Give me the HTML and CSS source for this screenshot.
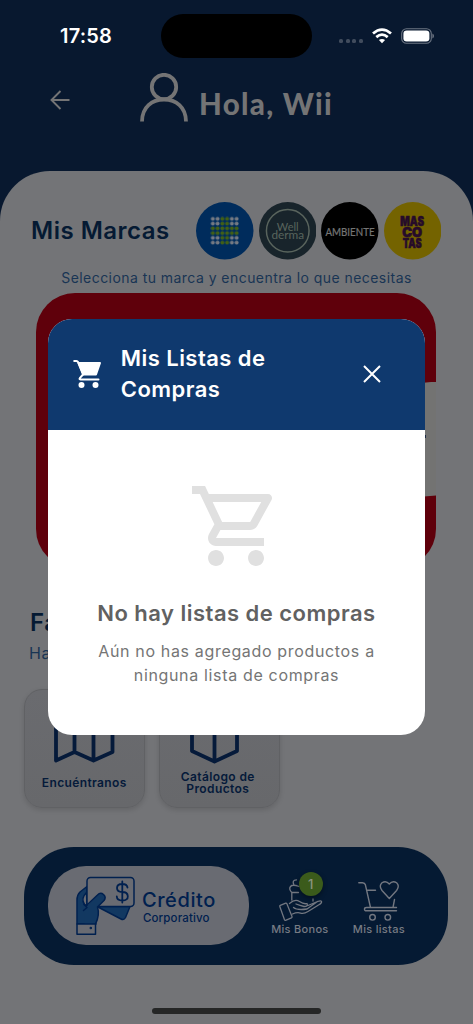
FILE: index.html
```html
<!DOCTYPE html>
<html lang="es">
<head>
<meta charset="utf-8">
<meta name="viewport" content="width=device-width, initial-scale=1">
<title>Mis Listas de Compras</title>
<link rel="stylesheet" href="styles.css">
</head>
<body>
<div class="screen">
  <div class="status">
    <span class="clock">17:58</span>
    <span class="island"></span>
    <span class="dots"><i></i><i></i><i></i><i></i></span>
    <svg class="wifi" width="20" height="16" viewBox="0 0 20 16" fill="none" stroke="#fff" stroke-width="2.8"><path d="M1 5.500Q10-2.200 19 5.500"/><path d="M4.300 9.100Q10 4.200 15.700 9.100"/><path d="M10 15.200 6.900 12.100Q10 9.700 13.100 12.100Z" fill="#fff" stroke="none"/></svg>
    <svg class="battery" width="34" height="16" viewBox="0 0 34 16"><rect x=".7" y=".7" width="29.600" height="14.600" rx="4.800" fill="none" stroke="#6b7482" stroke-width="1.1"/><rect x="2.400" y="2.400" width="26" height="11.200" rx="3.300" fill="#fff"/><path d="M31.400 5.500q1.600.6 1.600 2.500t-1.600 2.500z" fill="#6b7482"/></svg>
  </div>
  <header class="greeting">
    <svg class="back" width="20" height="20" viewBox="0 0 20 20" fill="none" stroke="#747475" stroke-width="1.900"><path d="M19.500 10H1.500M10.500 1 1.500 10l9 9"/></svg>
    <svg class="user" width="50" height="50" viewBox="0 0 50 50" fill="none" stroke="#747475" stroke-width="3.800"><circle cx="25" cy="14" r="12.200"/><path d="M3 48.500C3 34 13 26.500 25 26.500S47 34 47 48.500"/></svg>
    <h1>Hola, Wii</h1>
  </header>
  <main class="sheet">
    <div class="brands">
      <h2>Mis Marcas</h2>
      <div class="logos">
        <svg class="logo" viewBox="0 0 58 58"><defs><pattern id="w" x="14.600" y="14.600" width="4.800" height="4.800" patternUnits="userSpaceOnUse"><circle cx="2.400" cy="2.400" r="2" fill="#747982"/></pattern><pattern id="g" x="14.600" y="14.600" width="4.800" height="4.800" patternUnits="userSpaceOnUse"><circle cx="2.400" cy="2.400" r="2" fill="#415f16"/></pattern></defs><circle cx="29" cy="29" r="29" fill="#002c5c"/><path d="M14.600 14.600h28.800v28.800H14.600z" fill="url(#w)"/><path d="M24.200 14.600h9.600v28.800h-9.600zM14.600 24.200h28.800v9.600H14.600z" fill="#002c5c"/><path d="M24.200 14.600h9.600v9.600h9.600v9.600h-9.600v9.600h-9.600v-9.600h-9.600v-9.600h9.600z" fill="url(#g)"/></svg>
        <svg class="logo" viewBox="0 0 58 58"><circle cx="29" cy="29" r="29" fill="#18242b"/><circle cx="29" cy="29" r="21.500" fill="none" stroke="#59645d" stroke-width="1.500"/><g class="derma" text-anchor="middle"><text x="29" y="29.500" textLength="22" lengthAdjust="spacingAndGlyphs">Well</text><text x="29" y="37.500" textLength="33" lengthAdjust="spacingAndGlyphs">derma</text></g></svg>
        <svg class="logo" viewBox="0 0 58 58"><circle cx="29" cy="29" r="29" fill="#000"/><text class="ambiente" x="4.500" y="33.800" textLength="49.500" lengthAdjust="spacingAndGlyphs">AMBIENTE</text></svg>
        <svg class="logo" viewBox="0 0 58 58"><circle cx="29" cy="29" r="29" fill="#746300"/><g class="mascotas" text-anchor="middle"><text x="28.500" y="24.500" textLength="24" lengthAdjust="spacingAndGlyphs">MAS</text><text x="28.500" y="35" textLength="20" lengthAdjust="spacingAndGlyphs">CO</text><text x="28.500" y="46" textLength="19" lengthAdjust="spacingAndGlyphs">TAS</text></g></svg>
      </div>
    </div>
    <p class="hint">Selecciona tu marca y encuentra lo que necesitas</p>
    <div class="banner"><div class="band"></div></div>
    <h2 class="section">Fa</h2>
    <p class="sub">Ha</p>
    <div class="tiles">
      <div class="tile">
        <svg width="64" height="50" viewBox="0 0 64 50" fill="none" stroke="#051a3a" stroke-width="3.800" stroke-linejoin="round"><path d="M4 6 22.500-2 41.500 6 60.500-2V38L41.500 46.500 22.500 38 4 46.500ZM22.500 0V38M41.500 7V46"/></svg>
        <span>Encuéntranos</span>
      </div>
      <div class="tile two">
        <svg width="64" height="50" viewBox="0 0 64 50" fill="none" stroke="#051a3a" stroke-width="3.800" stroke-linejoin="round"><path d="M5 0 27.500 10 50 0V37L27.500 47.500 5 37ZM27.500 10V47"/></svg>
        <span>Catálogo de<br>Productos</span>
      </div>
    </div>
    <nav class="dock">
      <div class="credit">
        <svg width="60" height="60" viewBox="0 0 60 60" fill="none" stroke="#00204f" stroke-width="1.500" stroke-linejoin="round" stroke-linecap="round"><path d="M22 30.500 46 43q3 1.500 4.500-1.500l4.500-11z" fill="#123861"/><path d="M2 48V24q0-5 3-8l7-5.500V34L21 48z" fill="#123861"/><path d="M11.500 16.500q-6 6-2 12l2.500 1.500z" fill="#696b72"/><rect x="12" y="1.500" width="47" height="29" rx="3.500" fill="#696b72"/><path d="M9.500 34.500 12 31V30L22.500 19q3-3.200 6-.5t.5 6L22.500 31q2.500 8-2 17H9.500z" fill="#123861" stroke="none"/><path d="M8.500 34.500 12 31.500 9 28.500M12 29 22.500 19q3-3.200 6-.5t.5 6L22.500 31q2.500 8-2 17"/><rect x="2" y="48" width="18.500" height="10.200" fill="#696b72"/><circle cx="15.800" cy="52" r=".5"/><path d="M52.500 11.500q-.5-3.500-5.200-3.500-5.300 0-5.300 4t5.300 4 5.500 4.200-5.500 4.300q-5.300 0-5.500-4M47.300 5.500v21" stroke-width="1.800"/></svg>
        <div class="credit-text"><b>Crédito</b><span>Corporativo</span></div>
      </div>
      <div class="item bonos">
        <svg width="46" height="46" viewBox="0 0 46 46" fill="none" stroke="#737780" stroke-width="1.300" stroke-linejoin="round" stroke-linecap="round"><path d="M2.800 29.500Q2.500 28.700 3.300 28.300L8.700 26.200Q9.500 26 9.900 26.800L15 39.600Q15.200 40.400 14.400 40.800L8.500 43.300Q7.800 43.500 7.500 42.800ZM12.500 26.500Q18 21.500 22.500 24.500T30 26.500Q31.500 29.500 27 29.500 23 28.500 19 27M16.500 30.500Q20 33.500 30 32L40.500 24.500Q44.500 23 44.600 24.800T41.500 28L31 34.500Q27 37 23.500 36T15.500 37M31 28.500 40.500 24.500"/><path d="M14.800 23V15.500H21.500M14.800 15.500Q11.500 12 13.500 9.500T22 9.500M17 8Q14.500 3 19.500 2.800M36 22v2"/></svg>
        <span>Mis Bonos</span><em>1</em>
      </div>
      <div class="item listas">
        <svg width="46" height="46" viewBox="0 0 46 46" fill="none" stroke="#737780" stroke-width="1.400" stroke-linejoin="round" stroke-linecap="round"><path d="M2.800 5.700H6.500Q8.800 5.700 9.400 7.800L14.500 30.500M11.500 13.300H19.500M38.500 22.500 37 30.500M40.500 30.500H10.500Q8.500 30.500 8.500 32.200T10.500 33.800H40.500"/><path d="M33.300 21.500 26 13.500Q22.500 9 26 5.800 30 3 33.300 7 36.600 3 40.600 5.800 44 9 40.600 13.500Z"/><circle cx="16.500" cy="40.300" r="2.800"/><circle cx="31.800" cy="40.300" r="2.800"/></svg>
        <span>Mis listas</span>
      </div>
    </nav>
    <div class="home"></div>
  </main>
  <section class="dialog" role="dialog">
    <header class="dialog-head">
      <svg class="cart" width="30" height="30" viewBox="0 0 30 30" fill="none" stroke="#fff" stroke-width="2" stroke-linecap="round" stroke-linejoin="round"><path d="M1.200 2H3.500Q4.500 2 5 3L10 15.500 7 18.800Q5.800 20.500 7.500 20.500H25.500"/><path d="M5.500 4H27L23 15.500H10.500Z" fill="#fff"/><circle cx="8.500" cy="26" r="3" fill="#fff" stroke="none"/><circle cx="22.500" cy="26" r="3" fill="#fff" stroke="none"/></svg>
      <h2>Mis Listas de<br>Compras</h2>
      <svg class="close" width="18" height="18" viewBox="0 0 18 18" stroke="#fff" stroke-width="2"><path d="M1 1 17 17M17 1 1 17"/></svg>
    </header>
    <div class="dialog-body">
      <svg width="96" height="96" viewBox="0 0 24 24" fill="#e0e0e0"><path d="M15.550 13c.75 0 1.410-.41 1.750-1.030l3.580-6.490c.37-.66-.11-1.480-.87-1.480H5.210l-.94-2H1v2h2l3.600 7.590-1.350 2.440C4.520 15.370 5.480 17 7 17h12v-2H7l1.100-2h7.450zM6.160 6h12.150l-2.760 5H8.530L6.160 6zM7 18c-1.100 0-1.990.9-1.990 2S5.900 22 7 22s2-.9 2-2-.9-2-2-2zm10 0c-1.100 0-1.990.9-1.990 2s.89 2 1.990 2 2-.9 2-2-.9-2-2-2z"/></svg>
      <h3>No hay listas de compras</h3>
      <p>Aún no has agregado productos a<br>ninguna lista de compras</p>
    </div>
  </section>
</div>
</body>
</html>
```
FILE: styles.css
```css
* { box-sizing: border-box; margin: 0; padding: 0; }
body { font-family: Inter, "Liberation Sans", sans-serif; background: #08182f; }
svg { display: block; flex: none; }
.screen { position: relative; width: 473px; height: 1024px; overflow: hidden; display: flex; flex-direction: column; background: #08182f; }

.status { display: flex; align-items: center; height: 72px; padding-left: 60px; flex: none; }
.clock { width: 101px; color: #fff; font-size: 20px; font-weight: 600; letter-spacing: 0.2px; }
.island { width: 151px; height: 44px; border-radius: 22px; background: #000; }
.dots { display: flex; gap: 2.500px; margin: 9px 9px 0 27px; }
.dots i { width: 4px; height: 4px; border-radius: 1.500px; background: #414c5d; }
.battery { margin-left: 9px; }

.greeting { display: flex; height: 99px; flex: none; padding-left: 50px; color: #747475; }
.back { margin-top: 18px; }
.user { margin: 1px 0 0 69px; }
.greeting h1 { margin: 14px 0 0 10px; font-family: Lato, sans-serif; font-size: 29.500px; font-weight: 900; line-height: 36px; letter-spacing: 1.300px; white-space: nowrap; }

.sheet { flex: 1; border-radius: 50px 50px 0 0; background: #737477; display: flex; flex-direction: column; }
.brands { display: flex; align-items: center; padding: 31px 0 0 31px; }
.brands h2 { width: 165px; font-size: 24px; line-height: 30px; font-weight: 600; letter-spacing: 0.500px; color: #051a33; white-space: nowrap; }
.logos { display: flex; gap: 5px; }
.logo { width: 57.500px; height: 57.500px; }
.derma { font-family: Lato, sans-serif; font-size: 12px; fill: #59645d; }
.ambiente { font-family: Lato, sans-serif; font-size: 11px; fill: #747474; stroke: #747474; stroke-width: 0.250px; }
.mascotas { font-family: Inter, sans-serif; font-size: 13px; font-weight: 900; fill: #260b2a; stroke: #260b2a; stroke-width: 0.600px; }
.hint { margin-top: 8px; text-align: center; font-size: 14px; line-height: 20px; letter-spacing: 0.450px; color: #193554; white-space: nowrap; }
.banner { margin: 5px 0 0 36.400px; width: 400px; height: 275px; border-radius: 39px; background: #5f000b; padding-top: 89px; overflow: hidden; flex: none; }
.band { height: 120px; margin-left: 340px; background: linear-gradient(#1c2b45, #1c2b45) 48px 53px / 2px 3px no-repeat #737372; clip-path: polygon(0 6px, 100% 0, 100% 114px, 0 119px); }
.section { margin: 40px 0 0 30px; font-size: 24px; line-height: 30px; font-weight: 600; letter-spacing: 0.500px; color: #051a33; }
.sub { margin: 5px 0 0 29px; font-size: 16px; line-height: 20px; letter-spacing: 0.500px; color: #193554; }
.tiles { display: flex; gap: 14.500px; padding: 26.500px 0 0 24px; }
.tile { width: 120.500px; height: 118.500px; display: flex; flex-direction: column; align-items: center; padding-top: 24px; border: 1px solid #606164; border-radius: 18px; background: linear-gradient(#6a6b6f, #67686b); box-shadow: 0 2px 5px #00000022; }
.tile span { margin-top: 13px; font-size: 12px; line-height: 12px; font-weight: 600; letter-spacing: 0.380px; text-align: center; color: #051a3a; white-space: nowrap; }
.tile.two span { margin: 7px 3px 0 0; }

.dock { display: flex; width: 424px; height: 118px; margin: 39px 0 0 24.400px; padding: 19px 0 0 24px; border-radius: 50px; background: #051a33; flex: none; }
.credit { display: flex; width: 200.500px; height: 79px; padding: 10px 0 0 27px; border-radius: 38px; background: #696b72; color: #00204f; }
.credit-text { display: flex; flex-direction: column; margin: 13px 0 0 6.500px; }
.credit-text b { font-size: 20px; line-height: 22px; font-weight: 500; letter-spacing: 0.600px; }
.credit-text span { padding-left: 1px; font-size: 11.500px; line-height: 14px; font-weight: 500; letter-spacing: 0.150px; }
.item { position: relative; display: flex; flex-direction: column; align-items: center; width: 60px; padding-top: 11px; color: #777b83; font-size: 11px; line-height: 14px; font-weight: 500; letter-spacing: 0.300px; white-space: nowrap; }
.item span { margin-top: -1px; }
.bonos { margin-left: 21px; }
.listas { margin-left: 19px; }
.item em { position: absolute; left: 29px; top: 6px; width: 24px; height: 24px; border-radius: 50%; background: #3b5b1b; color: #8b9481; font-size: 13px; line-height: 24px; font-style: normal; font-weight: 500; text-align: center; box-shadow: 0 2px 5px #0006; }
.home { width: 169px; height: 6px; margin: 43px 0 0 152.400px; border-radius: 3px; background: #252626; flex: none; }

.dialog { position: absolute; left: 48.300px; top: 319px; width: 376.400px; height: 416px; border-radius: 24px; overflow: hidden; background: #fff; }
.dialog-head { display: flex; align-items: center; height: 110.500px; padding-left: 25px; background: #0f396e; color: #fff; }
.dialog-head h2 { width: 218px; margin-left: 17.500px; font-size: 22px; line-height: 31px; font-weight: 600; letter-spacing: 0.450px; }
.close { margin-left: 24px; }
.dialog-body { display: flex; flex-direction: column; align-items: center; padding-top: 48px; text-align: center; white-space: nowrap; }
.dialog-body h3 { margin-top: 24px; font-size: 22px; line-height: 30px; font-weight: 600; letter-spacing: 0.480px; color: #616161; }
.dialog-body p { margin-top: 11px; font-size: 16px; line-height: 24px; letter-spacing: 0.660px; color: #757575; }
```
